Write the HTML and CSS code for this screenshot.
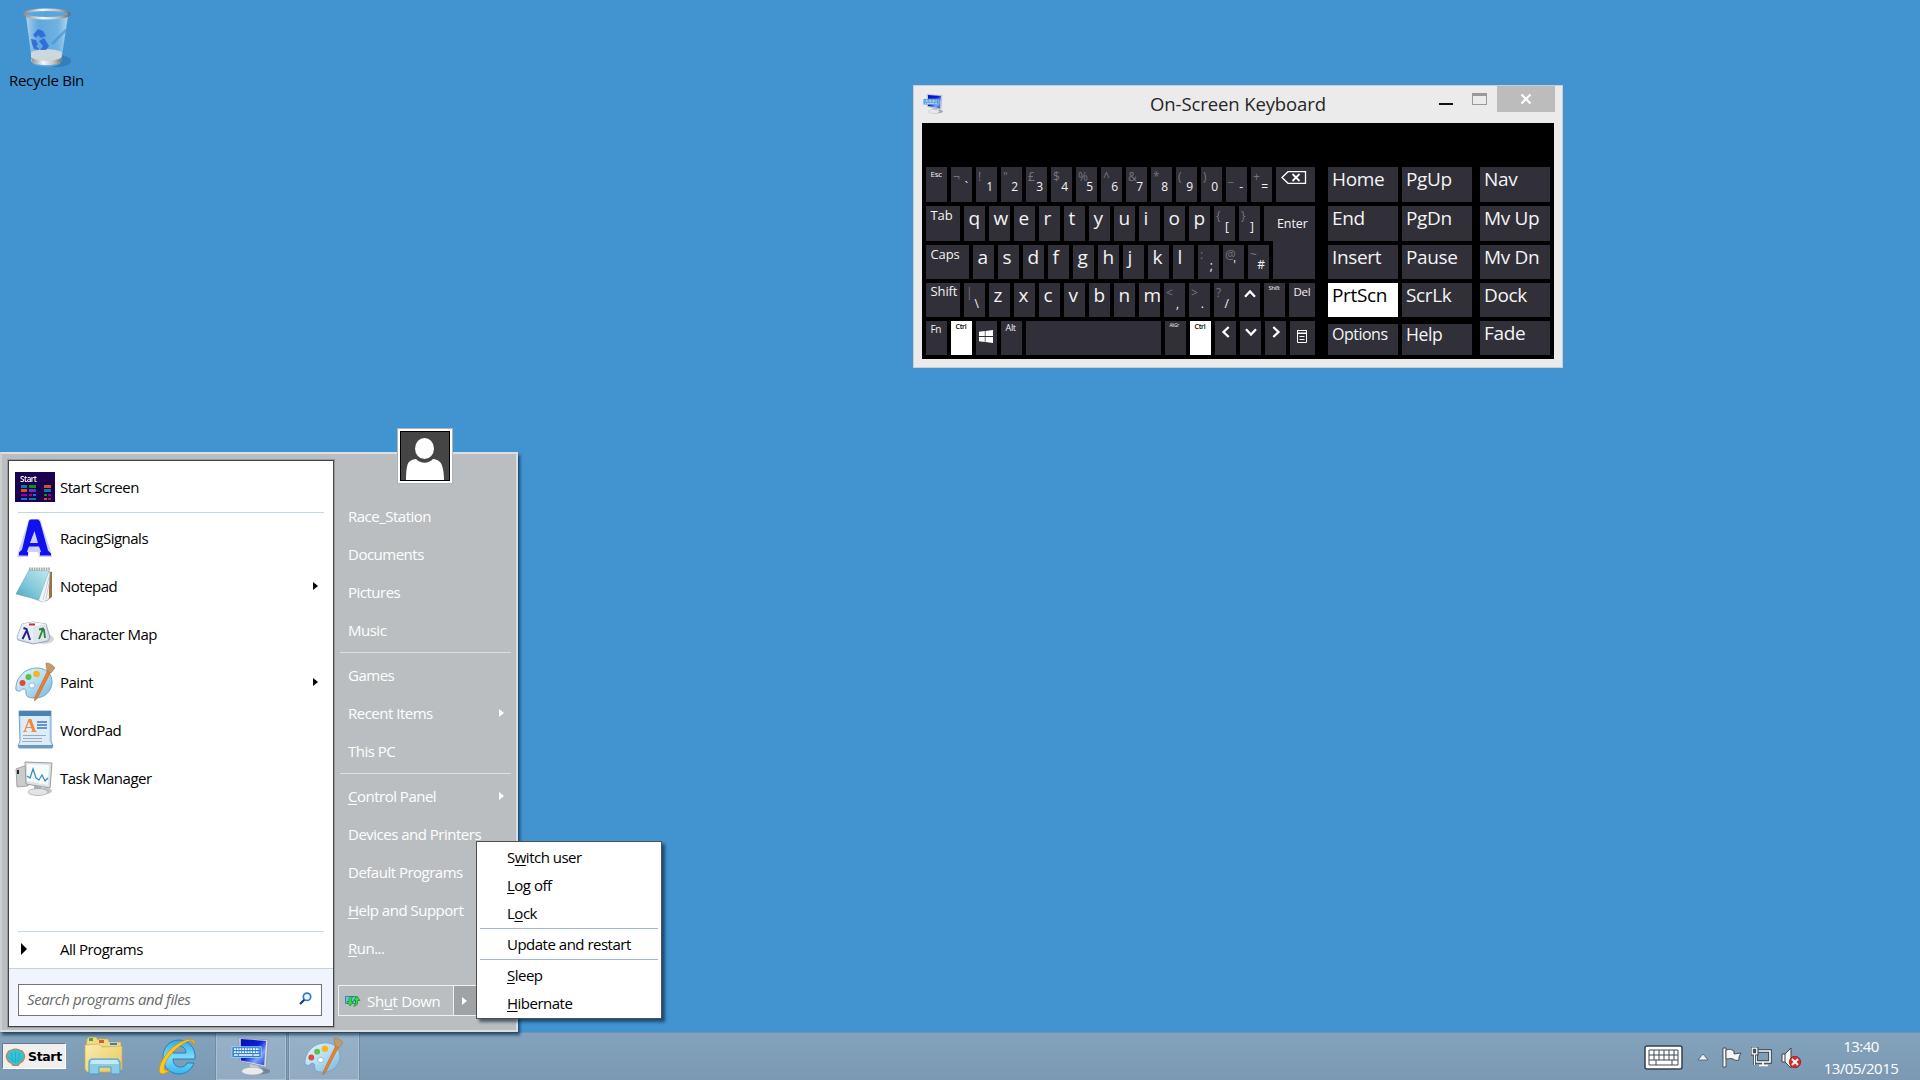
FILE: index.html
```html
<!DOCTYPE html>
<html lang="en">
<head>
<meta charset="utf-8">
<title>Desktop</title>
<link rel="stylesheet" href="styles.css">
</head>
<body>
<svg width="0" height="0" class="defs">
  <defs>
    <linearGradient id="silver" x1="0" x2="1" y1="0" y2="0"><stop offset="0" stop-color="#8d8d8d"/><stop offset=".4" stop-color="#f6f6f6"/><stop offset=".75" stop-color="#bdbdbd"/><stop offset="1" stop-color="#6f6f6f"/></linearGradient>
    <linearGradient id="pal" x1="0" x2="1" y1="0" y2="1"><stop offset="0" stop-color="#e6f5fc"/><stop offset=".5" stop-color="#b5def3"/><stop offset="1" stop-color="#78b4dc"/></linearGradient>
    <linearGradient id="note" x1="1" x2="0" y1="0" y2="1"><stop offset="0" stop-color="#c5e8f0"/><stop offset=".6" stop-color="#7cc6d8"/><stop offset="1" stop-color="#4aa2b8"/></linearGradient>
    <linearGradient id="screen" x1="0" x2="1" y1="0" y2="1"><stop offset="0" stop-color="#0710b0"/><stop offset=".45" stop-color="#0a1fd8"/><stop offset=".7" stop-color="#7fa4f4"/><stop offset="1" stop-color="#1b3fdc"/></linearGradient>
    <linearGradient id="folder" x1="0" x2="1" y1="0" y2="1"><stop offset="0" stop-color="#f9edb2"/><stop offset="1" stop-color="#e5c65a"/></linearGradient>
    <linearGradient id="ie" x1="0" x2="0" y1="0" y2="1"><stop offset="0" stop-color="#37a8e4"/><stop offset=".5" stop-color="#7bdcfb"/><stop offset="1" stop-color="#38b5ef"/></linearGradient>
    <linearGradient id="glass" x1="0" x2="1" y1="0" y2="0"><stop offset="0" stop-color="#cfe9fa" stop-opacity=".75"/><stop offset=".3" stop-color="#7fbce8" stop-opacity=".5"/><stop offset=".75" stop-color="#8cc5ee" stop-opacity=".6"/><stop offset="1" stop-color="#d4ecfb" stop-opacity=".75"/></linearGradient>
    <symbol id="palette" viewBox="0 0 40 40">
      <path d="M1 28C0 17 9 6 22 6c9 0 15 6 15 14 0 9-7 16-17 16-6 0-9-1-9-5 0-3 0-4-3-4-2 0-2 4-7 1z" fill="url(#pal)" stroke="#6fa5c8" stroke-width="1"/>
      <ellipse cx="17" cy="23.500" rx="3" ry="2.600" fill="#fff" stroke="#7fb0d0" stroke-width=".8"/>
      <circle cx="7.500" cy="21" r="3" fill="#e5483a"/><circle cx="13.500" cy="15" r="3" fill="#5fbe4b"/><circle cx="21.500" cy="12" r="3.300" fill="#f8b41c"/>
      <path d="M33 8l3 1.500-14 27-2.500 2.500.5-4z" fill="#e8812c" stroke="#b55e1b" stroke-width=".5"/>
      <path d="M32 9c-1-4-1-6-1-8 4 0 7 2 9 5l-4 5z" fill="#c39a68" stroke="#987347" stroke-width=".5"/>
    </symbol>
    <symbol id="osk" viewBox="0 0 40 40">
      <ellipse cx="27" cy="35" rx="13" ry="3.500" fill="#4b5f73" opacity=".5"/>
      <path d="M19 27l9 2 1 5h-9z" fill="#c9cdd2"/><ellipse cx="22" cy="35" rx="11" ry="4" fill="#e8eaec" stroke="#9da3aa" stroke-width=".6"/>
      <path d="M8 1l30 2-2 28-27-6z" fill="#d8dce4" stroke="#8a93a5" stroke-width=".8"/>
      <path d="M10 2l26 2-2 25-24-5z" fill="url(#screen)"/>
      <path d="M1 10h30v11H1z" fill="#2a7fd2" stroke="#a9d2f5" stroke-width=".9"/>
      <path d="M3 12.500h26M3 15.500h26" stroke="#fff" stroke-width="1.800" stroke-dasharray="2 .8"/><path d="M3 18.500h4m1 0h14m1 0h6" stroke="#fff" stroke-width="1.700"/>
    </symbol>
    <symbol id="tri" viewBox="0 0 5 8"><path d="M0 0l5 4-5 4z" fill="currentColor"/></symbol>
    <symbol id="chev" viewBox="0 0 12 12"><path d="M8.700 1L3.500 6l5.200 5" fill="none" stroke="#fff" stroke-width="2.300"/></symbol>
  </defs>
</svg>

<main class="desktop">
  <div class="shortcut">
    <svg width="54" height="64" viewBox="0 0 54 64">
      <ellipse cx="37" cy="55" rx="13" ry="6" fill="#1f5f96" opacity=".4"/>
      <path d="M5 10l6 46c2 6 27 6 29 0l7-46z" fill="url(#glass)"/>
      <path d="M10 47c3-5 29-5 31 0l-1 8c-4 5-26 5-30 0z" fill="#d9dcde" opacity=".9"/>
      <path d="M10 51c5 5 26 5 31 0l-1 5c-4 4-25 4-29 0z" fill="url(#silver)"/>
      <path d="M31 38L45 24" stroke="#3f8fd0" stroke-width="2.500" opacity=".6"/>
      <path d="M12 29l5-6 5 2 3 5-5 2-3-3-2 3zM10 33l5 1 2 5-2 1 3 3v1l-5-1-2-5zM18 35l5-3 5 8-3 4h-6l3-4z" fill="#2a63d8" opacity=".85"/>
      <ellipse cx="26" cy="8" rx="22.500" ry="4.300" fill="#58a6e0" stroke="url(#silver)" stroke-width="2.500"/>
    </svg>
    <span>Recycle Bin</span>
  </div>

  <section class="window">
    <header class="titlebar">
      <svg class="app-icon" width="20" height="20"><use href="#osk"/></svg>
      <h1>On-Screen Keyboard</h1>
      <div class="controls">
        <i class="min"></i><i class="max"></i>
        <span class="close"><svg width="12" height="10" viewBox="0 0 12 10"><path d="M1.500 .5l9 9M10.500 .5l-9 9" stroke="#fff" stroke-width="2.200"/></svg></span>
      </div>
    </header>
    <div class="keyboard">
      <div class="keys">
        <div class="row">
          <b class="key t8">Esc</b><b class="key dual"><i>¬</i><u>`</u></b><b class="key dual"><i>!</i><u>1</u></b><b class="key dual"><i>"</i><u>2</u></b><b class="key dual"><i>£</i><u>3</u></b><b class="key dual"><i>$</i><u>4</u></b><b class="key dual"><i>%</i><u>5</u></b><b class="key dual"><i>^</i><u>6</u></b><b class="key dual"><i>&amp;</i><u>7</u></b><b class="key dual"><i>*</i><u>8</u></b><b class="key dual"><i>(</i><u>9</u></b><b class="key dual"><i>)</i><u>0</u></b><b class="key dual"><i>_</i><u>-</u></b><b class="key dual"><i>+</i><u>=</u></b>
          <b class="key fill back"><svg width="26" height="13" viewBox="0 0 26 13"><path d="M1 6.500L7 .7h17.500v11.600H7z" fill="none" stroke="#fff" stroke-width="1.300"/><path d="M11.500 3l7 7M18.500 3l-7 7" stroke="#fff" stroke-width="1.800"/></svg></b>
        </div>
        <div class="row">
          <b class="key t13 w34">Tab</b><b class="key">q</b><b class="key">w</b><b class="key">e</b><b class="key">r</b><b class="key">t</b><b class="key">y</b><b class="key">u</b><b class="key">i</b><b class="key">o</b><b class="key">p</b><b class="key dual low"><i>{</i><u>[</u></b><b class="key dual low"><i>}</i><u>]</u></b><b class="key fill enter">Enter</b>
        </div>
        <div class="row">
          <b class="key t13 w43">Caps</b><b class="key">a</b><b class="key">s</b><b class="key">d</b><b class="key">f</b><b class="key">g</b><b class="key">h</b><b class="key">j</b><b class="key">k</b><b class="key">l</b><b class="key dual low"><i>:</i><u>;</u></b><b class="key dual wide"><i>@</i><u>'</u></b><b class="key dual"><i>~</i><u>#</u></b><b class="key fill joined"></b>
        </div>
        <div class="row">
          <b class="key t13 w34 up">Shift</b><b class="key dual low"><i>|</i><u>\</u></b><b class="key">z</b><b class="key">x</b><b class="key">c</b><b class="key">v</b><b class="key">b</b><b class="key">n</b><b class="key">m</b><b class="key dual low"><i>&lt;</i><u>,</u></b><b class="key dual low"><i>&gt;</i><u>.</u></b><b class="key dual low"><i>?</i><u>/</u></b><b class="key ico"><svg class="r90" width="12" height="12"><use href="#chev"/></svg></b><b class="key t6">Shift</b><b class="key t11 fill">Del</b>
        </div>
        <div class="row">
          <b class="key t10">Fn</b><b class="key t7 lit">Ctrl</b><b class="key ico win"><svg width="14" height="13" viewBox="0 0 14 13"><path d="M0 1.800L5.800 1v5.100H0zM6.500.9L14 0v6.100H6.500zM0 6.900h5.800V12L0 11.200zM6.500 6.900H14V13l-7.500-.9z" fill="#fff"/></svg></b><b class="key t9">Alt</b><b class="key w135"></b><b class="key t5">AltGr</b><b class="key t7 lit">Ctrl</b><b class="key ico"><svg width="12" height="12"><use href="#chev"/></svg></b><b class="key ico"><svg class="r270" width="12" height="12"><use href="#chev"/></svg></b><b class="key ico"><svg class="r180" width="12" height="12"><use href="#chev"/></svg></b><b class="key fill ico menu"><svg width="10" height="13" viewBox="0 0 10 13"><path d="M.5.500h9v12h-9zM0 3h10M2.500 6.500h5M2.500 9.500h5" fill="none" stroke="#fff" stroke-width="1"/><path d="M0 0h10v3.500H0z" fill="none" stroke="#fff"/></svg></b>
        </div>
      </div>
      <div class="side">
        <b class="key">Home</b><b class="key">PgUp</b><b class="key">Nav</b>
        <b class="key">End</b><b class="key">PgDn</b><b class="key">Mv Up</b>
        <b class="key">Insert</b><b class="key">Pause</b><b class="key">Mv Dn</b>
        <b class="key lit">PrtScn</b><b class="key">ScrLk</b><b class="key">Dock</b>
        <b class="key short small">Options</b><b class="key short">Help</b><b class="key">Fade</b>
      </div>
    </div>
  </section>

  <section class="start-menu">
    <div class="programs">
      <ul class="apps">
        <li class="first"><svg width="40" height="30" viewBox="0 0 40 30"><path d="M0 0h40v30H0z" fill="#1c0050"/><text x="5" y="9.500" class="tile-text" textLength="17">Start</text><path d="M6 13h6v3H6zM29 17h7v3h-7zM14 26h7v2h-7z" fill="#00829a"/><path d="M14 13h7v3h-7zM29 22h3v2h-3z" fill="#009a10"/><path d="M29 13h7v3h-7zM6 17h6v3H6zM29 26h3v2h-3z" fill="#dc4a28"/><path d="M14 17h7v3h-7z" fill="#6038b8"/><path d="M6 22h6v2H6zM14 22h3v2h-3zM33 22h3v2h-3z" fill="#9a0098"/><path d="M6 26h6v2H6zM18 22h3v2h-3z" fill="#1d70e8"/><path d="M33 26h3v2h-3z" fill="#b81440"/></svg><span>Start Screen</span></li>
        <li><svg width="40" height="40" viewBox="0 0 40 40"><path d="M14 1h11l11 33 1 5H24l-1-5H14l-1 5H2l1-5z" fill="#1010f0" opacity=".2"/><path d="M16 1.500h7l2 2 8 29 3 3v2H25v-3l1-1-2-5H14l-2 5 1 1v3H4v-3l3-3 7-29zM19.500 13l-4.500 12h8z" fill="#1010f0" fill-rule="evenodd"/></svg><span>RacingSignals</span></li>
        <li><svg width="40" height="40" viewBox="0 0 40 40"><path d="M30 5l7 1v25l-6 4z" fill="#9a7345"/><path d="M31 5l4 1-2 28-6 2-12-5z" fill="#e9edef" stroke="#9aa7ad" stroke-width=".6"/><path d="M14 4l20 1-10 29L1 28z" fill="url(#note)" stroke="#5aa4b4" stroke-width=".5"/><path d="M34 6L24 34l4 2 6-4z" fill="#f1f5f6"/><path d="M34 11l-6 23M34 18l-3 15" stroke="#a9bac2" stroke-width=".6"/><path d="M14 3h21" stroke="#a3a9a6" stroke-width="3" stroke-dasharray="1.600 .8"/></svg><span>Notepad</span><svg class="arrow" width="5" height="8"><use href="#tri"/></svg></li>
        <li><svg width="40" height="40" viewBox="0 0 40 40"><ellipse cx="29" cy="25" rx="10" ry="5" fill="#888" opacity=".35"/><path d="M7 10l11-2 13 2 4 13-2 4-15 3-15-4-1-3z" fill="#d5dbe8" stroke="#8b95a8" stroke-width=".8"/><path d="M7 10l11 3 1 16-17-5z" fill="#e9edf5"/><path d="M31 10l-13 3 1 16 13-3z" fill="#dfe6ee"/><path d="M7 10l11-2 13 2-13 3z" fill="#f7f9fc"/><path d="M14 10.500h6" stroke="#c93134" stroke-width="2"/><path d="M8.500 14l3 1 3.500 11M11.500 17l-4 8" stroke="#27247f" stroke-width="2" fill="none"/><path d="M24 25l4-10 1 1 1 8M24 15.500l5-1" stroke="#2d8038" stroke-width="1.800" fill="none"/></svg><span>Character Map</span></li>
        <li><svg width="40" height="40"><use href="#palette"/></svg><span>Paint</span><svg class="arrow" width="5" height="8"><use href="#tri"/></svg></li>
        <li><svg width="40" height="40" viewBox="0 0 40 40"><path d="M4 1h32v30l2 5-1 2H4l-1-2 2-5z" fill="#c3dcf1" stroke="#7ba3c9"/><path d="M4 1h32v5H4z" fill="#4d80b3"/><path d="M6 6h28v24l2 5H4l2-5z" fill="#dcedfa"/><path d="M3 35h35l-1 3H4z" fill="#6c98c2"/><text x="8" y="22" class="serif-a">A</text><path d="M22 12h10M22 15h10M22 18h10" stroke="#3f71c0" stroke-width="1.500"/><path d="M8 25.500h23M8 28.500h19M7 31.500h20" stroke="#9cabb9"/></svg><span>WordPad</span></li>
        <li><svg width="40" height="40" viewBox="0 0 40 40"><ellipse cx="27" cy="33" rx="10" ry="3.500" fill="#888" opacity=".5"/><path d="M1 11l8-3 4 1v19L2 29z" fill="#c9cbcd" stroke="#85888b" stroke-width=".7"/><path d="M2 12h2v4H2z" fill="#252a25"/><path d="M19 27l7 2v5h-7z" fill="#aaaeb2"/><ellipse cx="23" cy="34" rx="10" ry="3.500" fill="#e2e4e6" stroke="#999" stroke-width=".6"/><path d="M10 4l27 1-2 25-24-4z" fill="#dfe2e4" stroke="#999da0"/><path d="M12 6l22 1-1 20-21-4z" fill="#f6fbfe"/><path d="M12 18l3 2 3-9 3 9 3 2 3-5 3 6 3-3" fill="none" stroke="#3389bd" stroke-width="1.200"/></svg><span>Task Manager</span></li>
      </ul>
      <div class="all"><svg width="6" height="12"><path d="M0 0l6 6-6 6z"/></svg><span>All Programs</span></div>
      <div class="search"><div class="field"><em>Search programs and files</em><svg width="13" height="13" viewBox="0 0 13 13"><circle cx="8" cy="4.800" r="3.700" fill="#eef6fe" stroke="#2b7cc9" stroke-width="1.700"/><path d="M5.300 7.700L1 12" stroke="#123f86" stroke-width="2.200"/></svg></div></div>
    </div>
    <div class="places">
      <svg class="avatar" width="50" height="50" viewBox="0 0 50 50"><path d="M0 0h50v50H0z"/><path d="M1 1h48v48H1z" fill="#454545"/><ellipse cx="24.500" cy="17.500" rx="9.500" ry="10.500" fill="#fff"/><path d="M6 49c0-10 1-16 3-18 2-2 5-3 7-3 5 5 12 5 17 0 2 0 5 1 7 3 2 2 4 8 4 18z" fill="#fff"/></svg>
      <ul>
        <li>Race_Station</li><li>Documents</li><li>Pictures</li><li>Music</li>
        <li class="sep"></li>
        <li>Games</li><li>Recent Items<svg class="arrow" width="5" height="8"><use href="#tri"/></svg></li><li>This PC</li>
        <li class="sep"></li>
        <li><span><u>C</u>ontrol Panel</span><svg class="arrow" width="5" height="8"><use href="#tri"/></svg></li><li>Devices and Printers</li><li>Default Programs</li><li><span><u>H</u>elp and Support</span></li><li><span><u>R</u>un...</span></li>
      </ul>
      <div class="power">
        <div class="shut"><svg width="16" height="12" viewBox="0 0 16 12"><path d="M.5 1.500h10v7H.5z" fill="#6cc0ec" stroke="#2275a8" stroke-width=".8"/><path d="M8 1.500C4.500 1 3.500 3.500 4 6.500H2L5.200 11 8.400 6.500H6.500C6.300 4.500 6.500 3 8 1.500z" fill="#35e035" stroke="#0d7a14" stroke-width=".6"/><path d="M8.500 11c3.500.3 4.500-2 4-5.500h2.500L12 1 8.700 5.500h1.800c.2 2.500 0 4-2 5.500z" fill="#35e035" stroke="#0d7a14" stroke-width=".6"/></svg><span>Sh<u>u</u>t Down</span></div>
        <div class="more"><svg width="5" height="8"><use href="#tri"/></svg></div>
      </div>
    </div>
    <ul class="popup">
      <li><span>S<u>w</u>itch user</span></li><li><span><u>L</u>og off</span></li><li><span>L<u>o</u>ck</span></li>
      <li class="sep"></li><li>Update and restart</li><li class="sep"></li>
      <li><span><u>S</u>leep</span></li><li><span><u>H</u>ibernate</span></li>
    </ul>
  </section>
</main>

<footer class="taskbar">
  <div class="start"><svg width="21" height="18" viewBox="0 0 21 18"><path d="M10.500 1c2 0 3 .5 4 1 2 .3 3.500 1.500 4 3 1.500 2 1.500 4 .5 6-.5 2-2 3-4 4l-2 2.500h-5L6 15c-2-1-3.500-2-4-4-1-2-1-4 .5-6 .5-1.500 2-2.700 4-3 1-.5 2-1 4-1z" fill="#35c4d6" stroke="#d87a45" stroke-width="1.200"/><path d="M10.500 15V4M9 14L6 5M12 14l3-9M8 14L3.500 8.500M13 14l4.500-5.500" stroke="#1ea3bb" stroke-width=".7"/></svg><span>Start</span></div>
  <div class="task"><svg width="40" height="40" viewBox="0 0 40 40"><path d="M3 3l2-2h7l2 3 1-1h9l1 3h12v5H2z" fill="#f0d988" stroke="#c4a040" stroke-width=".6"/><path d="M5 2h4v3H5z" fill="#48a64e"/><path d="M15 4h5v3h-5z" fill="#e05a28"/><path d="M26 7h7v2h-7z" fill="#2385e0"/><path d="M1 9l14-1 3 3 20-1v23l-3 3H3l-2-3z" fill="url(#folder)" stroke="#d1ae48" stroke-width=".7"/><path d="M5 38V26c0-2 1-3 3-3h26l2 3v12h-9v-7H15v7z" fill="#8acbe8" stroke="#4c9cc7"/><path d="M6 28l2-4h25l2 4z" fill="#c5e9f8"/></svg></div>
  <div class="task"><svg width="40" height="40" viewBox="0 0 40 40"><path d="M38 23H16c0 10 12 10 14 4h7c-3 8-9 11-15 11C13 38 6 31 6 21S13 4 22 4s17 7 16 19zM16 17h13c0-9-13-9-13 0z" fill="url(#ie)" stroke="#147fbe" stroke-width=".9" fill-rule="evenodd"/><path d="M38 8c0-9-15-4-25 6C3 24-1 37 5 38c3 0 6-2 8-4-5 2-7 0-5-6 2-6 8-13 15-18C31 4 37 3 36 8z" fill="#fbc720" stroke="#c98c0c" stroke-width=".7"/></svg></div>
  <div class="task open"><svg width="39" height="39"><use href="#osk"/></svg></div>
  <div class="task open"><svg width="39" height="39"><use href="#palette"/></svg></div>
  <div class="tray">
    <svg width="40" height="26" viewBox="0 0 40 26"><rect x="1" y="1" width="37" height="23" rx="2" fill="#fff" stroke="#34424e" stroke-width="1.500"/><path d="M5 5h29v15H5zM5 10h29M5 15h29M10 5v10M15 5v10M20 5v10M25 5v10M30 5v10M12 15v5M28 15v5" fill="none" stroke="#3c4854"/></svg>
    <svg class="up-arrow" width="12" height="8" viewBox="0 0 12 8"><path d="M1 7l5-6 5 6z" fill="#eef2f8" stroke="#4a5c6e" stroke-width=".8"/></svg>
    <svg class="flag" width="21" height="21" viewBox="0 0 21 21"><path d="M1 1h3v19H1z" fill="#fff" stroke="#37444f" stroke-width=".9"/><path d="M4 3c4-1 5-1 8 1v3l7-1-2 4 0 3c-3 1-4 0-6-1-3-1-4 0-7 0z" fill="#f5f5f5" stroke="#37444f" stroke-width=".9"/></svg>
    <svg class="net" width="21" height="21" viewBox="0 0 21 21"><path d="M5 4h14v11H5z" fill="none" stroke="#34424e" stroke-width="3.600"/><path d="M5 4h14v11H5zM12 15v3M8 18.500h9" fill="none" stroke="#fff" stroke-width="1.700"/><path d="M1 1h5v6H1zM3.500 7v11" fill="#8aa4ba" stroke="#34424e" stroke-width="3"/><path d="M1.200 1.200h4.600v5.600H1.200zM3.500 7v11" fill="#42515e" stroke="#fff" stroke-width="1.300"/></svg>
    <svg class="vol" width="21" height="22" viewBox="0 0 21 22"><path d="M1 7h3l6-6v20l-6-6H1z" fill="#f6f6f6" stroke="#37444f"/><path d="M4 7v8" stroke="#37444f"/><circle cx="14" cy="15" r="5.700" fill="#d82b2b" stroke="#8d1414" stroke-width=".7"/><path d="M11 12l6 6M17 12l-6 6" stroke="#fff" stroke-width="1.900"/></svg>
    <div class="clock"><span>13:40</span><span>13/05/2015</span></div>
  </div>
</footer>
</body>
</html>
```
FILE: styles.css
```css
* { box-sizing: border-box; }
body {
  margin: 0; width: 1920px; height: 1080px; overflow: hidden;
  display: flex; flex-direction: column;
  font: 15px/20px "Open Sans", "Noto Sans", sans-serif;
  letter-spacing: -.5px; background: #4294d1; color: #000;
}
ul { list-style: none; margin: 0; padding: 0; }
svg { display: block; flex: none; }
.defs { position: absolute; }
.desktop { height: 1032px; position: relative; }

.shortcut { width: 92px; padding-top: 6px; display: flex; flex-direction: column; align-items: center; }
.shortcut svg { margin-left: 4px; }
.shortcut span { white-space: nowrap; line-height: 20px; margin-left: 1px; letter-spacing: -.3px; }

/* On-screen keyboard window */
.window {
  position: absolute; left: 913px; top: 85px; width: 650px; height: 283px;
  background: #ebebeb; border: 1px solid #cfcccc; padding: 0 8px 8px;
  display: flex; flex-direction: column;
}
.titlebar { display: grid; grid-template-columns: 150px 1fr 150px; height: 37px; flex: none; }
.app-icon { margin: 8px 0 0 1px; }
.titlebar h1 { margin: 0; font-size: 18.500px; font-weight: 400; line-height: 35px; text-align: center; color: #262626; letter-spacing: -.1px; white-space: nowrap; }
.controls { display: flex; justify-content: flex-end; margin-right: -1px; }
.min { width: 14px; height: 2px; background: #111; margin: 17px 19px 0 0; }
.max { width: 15px; height: 12px; border: 1px solid #999; border-top-width: 3px; margin: 7px 10px 0 0; }
.close { width: 58px; height: 26px; background: #bcbcbc; display: grid; place-items: center; }
.keyboard { background: #000; flex: 1; padding: 44px 4px 3px; display: flex; gap: 13px; }
.keys { width: 389px; display: flex; flex-direction: column; gap: 4px; }
.row { display: flex; gap: 4px; height: 34px; }
.row:nth-child(-n+2) { height: 35px; }
.key {
  flex: none; width: 21px; background: #312f38; color: #f4f4f4;
  font-weight: 400; font-size: 19px; line-height: 25px; padding-left: 4.500px; letter-spacing: -.3px;
  white-space: nowrap;
}
.key.fill { flex: 1; }
.key.w34 { width: 34px; }
.key.w43 { width: 43px; }
.key.w135 { width: 135px; }
.key.t13 { font-size: 13px; line-height: 19px; letter-spacing: -.1px; }
.key.t13.up { line-height: 17px; }
.key.t11 { font-size: 11.500px; line-height: 17px; }
.key.t10 { font-size: 10px; line-height: 16px; }
.key.t9 { font-size: 9px; line-height: 13px; }
.key.t8 { font-size: 8px; line-height: 14px; }
.key.t7 { font-size: 7px; font-weight: 600; line-height: 12px; }
.key.t6 { font-size: 6px; line-height: 10px; }
.key.t5 { font-size: 4.500px; line-height: 9px; }
.key.lit { background: #fff; color: #000; }
.key.enter { font-size: 12.500px; line-height: 25px; padding: 5px 0 0 13px; letter-spacing: -.1px; }
.key.joined { margin-top: -4px; }
.key.back { padding: 4px 0 0 5px; }
.key.dual { display: grid; grid-template: 35px / 100%; padding: 0 4px 0 2px; font-size: 12px; letter-spacing: 0; }
.dual i, .dual u { grid-area: 1 / 1; font-style: normal; text-decoration: none; line-height: 20px; }
.dual i { color: #77757c; }
.dual u { justify-self: end; padding-top: 10px; }
.dual.low u { padding: 11px 2px 0 0; }
.dual.wide u { padding-right: 4px; }
.key.ico { padding: 5px 0 0 5px; }
.key.ico.win { padding: 9px 0 0 3px; }
.key.ico.menu { padding: 9px 0 0 7px; }
.r90 { transform: rotate(90deg); }
.r180 { transform: rotate(180deg); }
.r270 { transform: rotate(270deg); }
.side { display: grid; grid-template: 35px 35px 34px 34px 34px / 70px 70px 70px; gap: 4px; }
.side .key { width: 70px; letter-spacing: -.35px; padding-left: 4px; }
.side .key:nth-child(3n) { margin-left: 4px; }
.side .short { margin-top: 3px; line-height: 21px; font-size: 17.500px; }
.side .small { font-size: 16px; letter-spacing: -.5px; }

/* Start menu */
.start-menu {
  position: absolute; left: 0; top: 452px; width: 518px; height: 580px;
  background: #babec1; border: 2px solid #dbdfe1; border-left-color: #ccd0d3; display: flex;
  box-shadow: 2px 3px 3px rgba(0,30,60,.65);
}
.programs {
  width: 326px; height: 567px; margin: 6px 0 0 6px; background: #fff; border: 1px solid #444;
  outline: 1px solid #989b9e; display: flex; flex-direction: column;
}
.apps { flex: 1; padding: 3px 9px 0 6px; }
.apps li { height: 48px; display: flex; align-items: center; gap: 5px; padding-bottom: 2px; }
.apps li svg:first-child { filter: blur(.25px); }
.apps .first { position: relative; height: 51px; padding-bottom: 6px; }
.apps .first::after { content: ""; position: absolute; left: 3px; right: 0; top: 48px; height: 1px; background: #bed8f2; }
.arrow { margin-left: auto; }
.apps .arrow { margin: -1px 6px 0 auto; color: #000; }
.tile-text { font-size: 8px; font-weight: 600; fill: #fff; letter-spacing: 0; }
.serif-a { font: bold 19px "Liberation Serif", serif; fill: #f28a38; }
.all { height: 37px; margin: 0 9px; border-top: 1px solid #bed8f2; display: flex; align-items: center; padding: 0 0 2px 3px; gap: 33px; }
.search { height: 58px; background: #f1f4fc; border-top: 1px solid #bfd2e8; padding: 15px 11px 0 9px; }
.field { height: 32px; background: #fff; border: 1px solid #747474; display: flex; align-items: center; justify-content: space-between; padding: 0 9px 3px 8px; color: #686868; }
.field em { letter-spacing: -.4px; }
.places { flex: 1; color: #fff; display: flex; flex-direction: column; }
.avatar { margin: -25px 0 0 64px; border: 2px solid #fff; outline: 1px solid #b0b4b8; width: 54px; height: 54px; }
.places ul { padding-top: 15px; }
.places li { height: 38px; display: flex; align-items: center; padding: 0 12px 2px 14px; }
.places li.sep { height: 1px; margin: 2px 5px 4px 6px; background: #dbdfe1; padding: 0; }
.power { display: flex; height: 31px; margin: 17px 5px 0 4px; border: 1px solid #eef0f1; }
.shut { width: 115px; display: flex; align-items: center; gap: 6px; padding-left: 6px; border-right: 1px solid #eef0f1; letter-spacing: -.35px; }
.more { flex: 1; background: #9fa3a6; padding: 11px 0 0 8px; }
.popup {
  position: absolute; left: 474px; top: 387px; width: 186px; height: 178px;
  background: #fff; border: 1px solid #505050; padding: 2px 3px; box-shadow: 3px 3px 3px rgba(0,25,50,.6);
}
.popup li { height: 28px; display: flex; align-items: center; padding: 0 0 2px 27px; }
.popup li.sep { height: 1px; background: #a5b4dc; margin: 0 0 2px; padding: 0; }
.popup u, .places u { text-underline-offset: 2px; text-decoration-thickness: 1px; }

/* Taskbar */
.taskbar { height: 48px; background: linear-gradient(#83a2bc, #7b99b2); border-top: 1px solid #6c93b4; display: flex; }
.start {
  width: 64px; height: 26px; margin: 10px 4px 0 2px; background: #efefef; border: 1px solid; border-color: #687a8a #fff #fff #687a8a;
  display: flex; align-items: center; gap: 2px; padding: 1px 0 0 2px; font: bold 12.500px "DejaVu Sans", sans-serif; letter-spacing: -.35px;
}
.task { width: 70px; height: 47px; margin-right: 3px; display: grid; place-items: center; border: 1px solid transparent; }
.task.open { background: rgba(200,218,235,.28); border-color: #a9c0d2; outline: 1px solid #6f8ca4; outline-offset: 0; }
.task svg { margin: -1px 2px 0 0; }
.tray { margin-left: auto; display: flex; color: #fff; padding-top: 12px; }
.up-arrow { margin: 8px 0 0 13px; }
.flag { margin: 2px 0 0 13px; }
.net { margin: 2px 0 0 8px; }
.vol { margin: 2px 0 0 9px; }
.clock { width: 118px; margin-top: -10px; display: flex; flex-direction: column; align-items: center; line-height: 22px; }
```
